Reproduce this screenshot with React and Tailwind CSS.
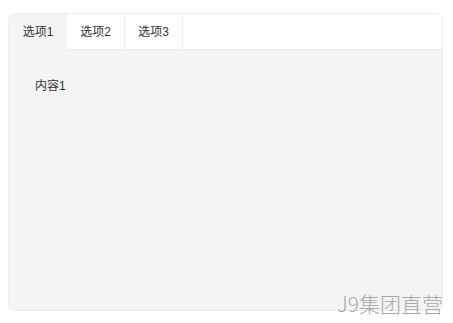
export default function App() {
  const tabs = ["选项1", "选项2", "选项3"];
  return (
    <div
      className="relative w-[453px] h-[323px] bg-white pt-[13px] pl-[8px]"
      style={{ fontFamily: '"Liberation Sans", "Noto Sans CJK SC", sans-serif' }}
    >
      <div className="w-[435px] h-[298px] rounded-[6px] border border-[#eeeeee] overflow-hidden flex flex-col bg-[#f4f4f4]">
        <div className="flex h-[36px] shrink-0">
          {tabs.map((t, i) => (
            <div
              key={t}
              className={`w-[58px] flex items-center justify-center text-[12px] text-[#333] ${
                i === 0 ? "bg-[#f4f4f4]" : "bg-white border-r border-b border-[#eeeeee]"
              }`}
            >
              {t}
            </div>
          ))}
          <div className="flex-1 bg-white border-b border-[#eeeeee]" />
        </div>
        <div className="flex-1 pt-[27px] pl-[26px] text-[12px] text-[#333]">内容1</div>
      </div>
      <div
        className="absolute right-[10px] bottom-[9px] text-[21px] leading-none font-light text-[#a8a8a8]"
        style={{ fontFamily: '"Noto Sans CJK SC", sans-serif' }}
      >
        J9集团直营
      </div>
    </div>
  );
}
